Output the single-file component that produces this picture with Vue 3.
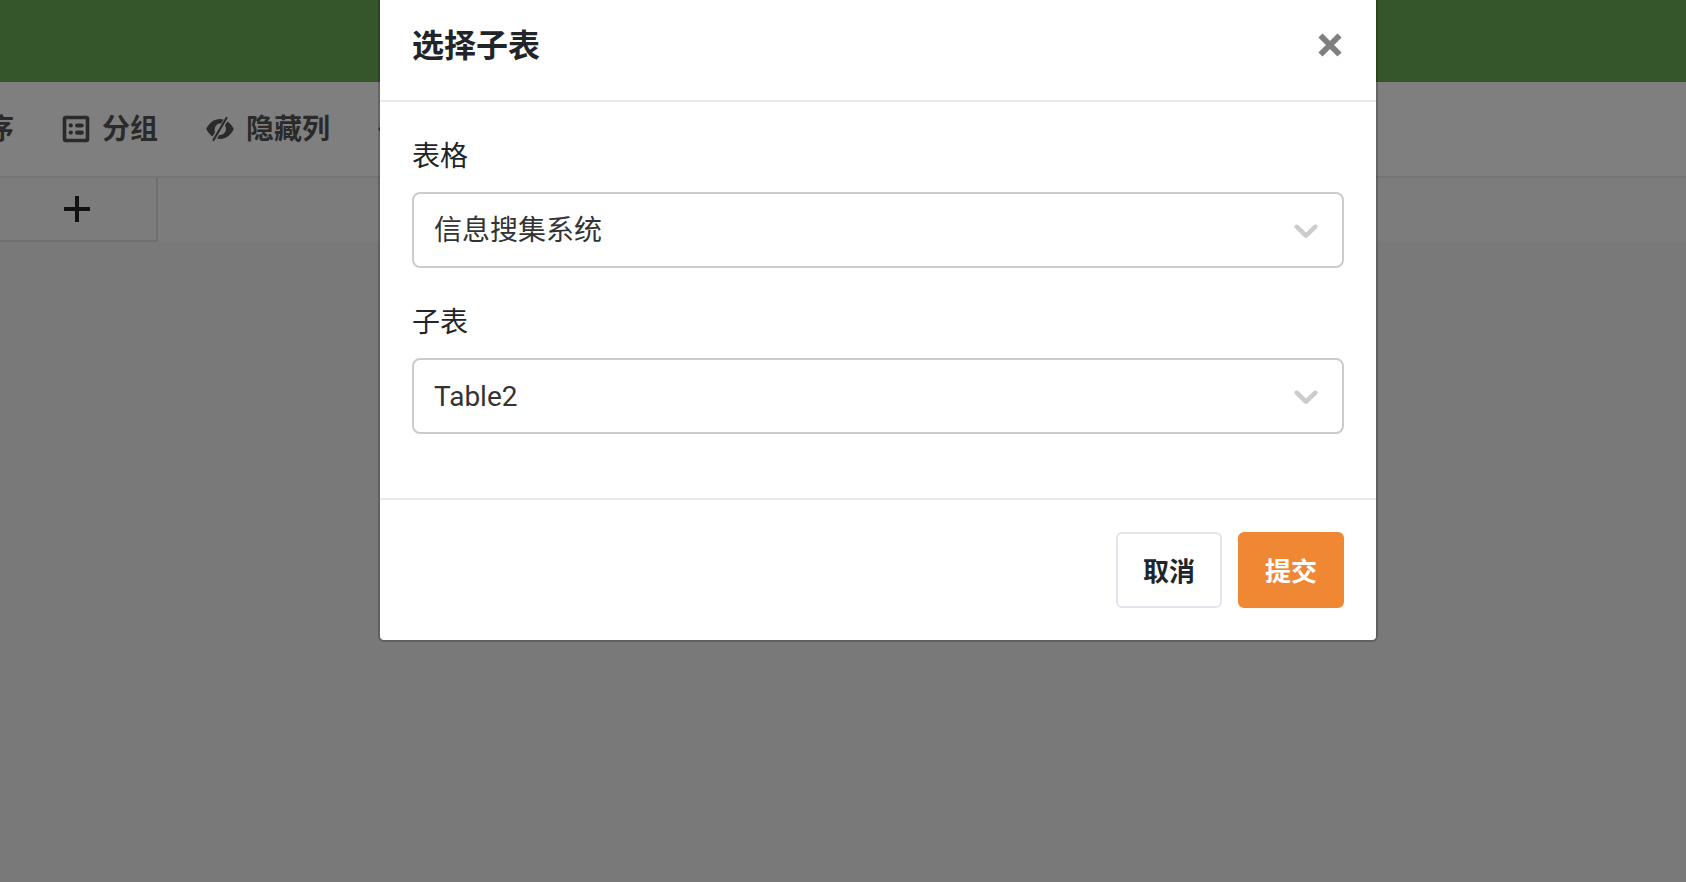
<script setup>
import { ref } from 'vue'

const table = ref('信息搜集系统')
const subtable = ref('Table2')
</script>

<template>
  <div class="page">
    <div class="app" inert>
      <header class="topbar"></header>
      <nav class="toolbar">
        <button class="tool" type="button"><span>排序</span></button>
        <button class="tool" type="button">
          <svg class="icon" viewBox="0 0 32 32" aria-hidden="true">
            <rect x="4.500" y="4.500" width="23" height="23" rx="1" fill="none" stroke="currentColor" stroke-width="3.600" />
            <circle cx="10.800" cy="12.400" r="2.100" fill="currentColor" />
            <circle cx="10.800" cy="19.600" r="2.100" fill="currentColor" />
            <rect x="15" y="10.400" width="8.800" height="4.200" rx="2.100" fill="currentColor" />
            <rect x="15" y="17.600" width="8.800" height="4.200" rx="2.100" fill="currentColor" />
          </svg>
          <span>分组</span>
        </button>
        <button class="tool" type="button">
          <svg class="icon" viewBox="0 0 32 32" aria-hidden="true">
            <path
              fill="currentColor"
              d="M19.500 6.500C18.400 6.200 17.200 6 16 6 10 6 5 10 2.200 16c1.500 3.200 3.700 5.800 6.300 7.500l2.600-4.300A6.500 6.500 0 0 1 17.400 10.200zM23.500 8.500C26.100 10.200 28.300 12.800 29.800 16 27 22 22 26 16 26c-1 0-2-.1-3-.4l2.200-3.500A6.300 6.300 0 0 0 21 12.500z"
            />
            <path d="M22.500 5L9.500 27" stroke="currentColor" stroke-width="2.200" stroke-linecap="round" />
          </svg>
          <span>隐藏列</span>
        </button>
        <button class="tool" type="button" aria-label="更多">
          <svg class="icon" viewBox="0 0 32 32" aria-hidden="true">
            <path d="M5 16h14M9 11l-5 5 5 5" fill="none" stroke="currentColor" stroke-width="3" stroke-linejoin="round" />
          </svg>
        </button>
      </nav>
      <div class="tabs">
        <button class="add" type="button" aria-label="添加">
          <svg class="plus" viewBox="0 0 28 28" aria-hidden="true">
            <path d="M14 1v26M1 14h26" stroke="currentColor" stroke-width="4" />
          </svg>
        </button>
      </div>
      <main class="canvas"></main>
    </div>

    <div class="overlay">
      <form class="modal" role="dialog" aria-labelledby="dialog-title" @submit.prevent>
        <div class="modal-header">
          <h1 id="dialog-title">选择子表</h1>
          <button class="close" type="button" aria-label="关闭">
            <svg viewBox="0 0 24 24" aria-hidden="true">
              <path d="M3.200 3.200L20.800 20.800M20.800 3.200L3.200 20.800" stroke="currentColor" stroke-width="5.400" />
            </svg>
          </button>
        </div>
        <div class="modal-body">
          <div class="field">
            <label for="table">表格</label>
            <div class="control">
              <select id="table" v-model="table">
                <option>信息搜集系统</option>
              </select>
              <svg class="chevron" viewBox="0 0 20 20" aria-hidden="true">
                <path
                  fill="currentColor"
                  d="M4.516 7.548c0.436-0.446 1.043-0.481 1.576 0l3.908 3.747 3.908-3.747c0.533-0.481 1.141-0.446 1.574 0 0.436 0.445 0.408 1.197 0 1.615-0.406 0.418-4.695 4.502-4.695 4.502-0.217 0.223-0.502 0.335-0.787 0.335s-0.570-0.112-0.789-0.335c0 0-4.287-4.084-4.695-4.502s-0.436-1.170 0-1.615z"
                />
              </svg>
            </div>
          </div>
          <div class="field">
            <label for="subtable">子表</label>
            <div class="control">
              <select id="subtable" v-model="subtable">
                <option>Table2</option>
              </select>
              <svg class="chevron" viewBox="0 0 20 20" aria-hidden="true">
                <path
                  fill="currentColor"
                  d="M4.516 7.548c0.436-0.446 1.043-0.481 1.576 0l3.908 3.747 3.908-3.747c0.533-0.481 1.141-0.446 1.574 0 0.436 0.445 0.408 1.197 0 1.615-0.406 0.418-4.695 4.502-4.695 4.502-0.217 0.223-0.502 0.335-0.787 0.335s-0.570-0.112-0.789-0.335c0 0-4.287-4.084-4.695-4.502s-0.436-1.170 0-1.615z"
                />
              </svg>
            </div>
          </div>
        </div>
        <div class="modal-footer">
          <button class="btn cancel" type="button">取消</button>
          <button class="btn submit" type="submit">提交</button>
        </div>
      </form>
    </div>
  </div>
</template>

<style>
body {
  overflow: hidden;
}
</style>

<style scoped>
.page {
  position: relative;
  min-height: 100vh;
  font-family: Roboto, "Noto Sans CJK SC", sans-serif;
  color: #212529;
}
.page * {
  box-sizing: border-box;
}
button {
  margin: 0;
  padding: 0;
  border: 0;
  background: none;
  font: inherit;
  color: inherit;
}
.app {
  display: flex;
  flex-direction: column;
  min-height: 100vh;
}
.topbar {
  height: 82px;
  background: #6aac57;
}
.toolbar {
  display: flex;
  align-items: center;
  gap: 46px;
  height: 96px;
  margin-left: -42px;
  border-bottom: 2px solid #eaeaea;
  background: #fff;
  color: #555;
  font-size: 28px;
  font-weight: 600;
}
.tool {
  display: flex;
  align-items: center;
  gap: 10px;
  flex: none;
  line-height: 42px;
}
.tool span {
  padding-top: 2px;
}
.icon {
  width: 32px;
  height: 32px;
}
.tabs {
  height: 64px;
  background: #f9f9f9;
}
.add {
  display: flex;
  align-items: center;
  justify-content: flex-end;
  width: 158px;
  height: 64px;
  padding-right: 65px;
  border-right: 2px solid #dedede;
  border-bottom: 2px solid #dedede;
}
.plus {
  width: 28px;
  height: 28px;
}
.canvas {
  flex: 1;
  background: #f2f2f2;
}
.overlay {
  position: absolute;
  inset: 0;
  padding: 0 308px 0 378px;
  background: rgba(0, 0, 0, 0.5);
}
.modal {
  border: 2px solid rgba(0, 0, 0, 0.2);
  border-top: 0;
  border-radius: 0 0 6px 6px;
  background: #fff;
  background-clip: padding-box;
}
.modal-header {
  display: flex;
  align-items: center;
  justify-content: space-between;
  padding: 20px 33px 30px 32px;
  border-bottom: 2px solid #e9eaf0;
}
h1 {
  margin: 0;
  padding-top: 2px;
  font-size: 32px;
  font-weight: 600;
  line-height: 48px;
}
.close {
  display: flex;
  color: #7f7f7f;
}
.close svg {
  width: 26px;
  height: 26px;
}
.modal-body {
  padding: 32px 32px 64px;
}
.field + .field {
  margin-top: 32px;
}
label {
  display: block;
  margin-bottom: 12px;
  font-size: 28px;
  line-height: 46px;
}
.control {
  position: relative;
}
select {
  appearance: none;
  display: block;
  width: 100%;
  height: 76px;
  padding: 0 80px 0 20px;
  border: 2px solid #ccc;
  border-radius: 8px;
  background: #fff;
  color: #333;
  font: inherit;
  font-size: 28px;
}
.chevron {
  position: absolute;
  top: 18px;
  right: 18px;
  width: 40px;
  height: 40px;
  color: #ccc;
  pointer-events: none;
}
.modal-footer {
  display: flex;
  justify-content: flex-end;
  gap: 16px;
  padding: 32px;
  border-top: 2px solid #e9eaf0;
}
.btn {
  height: 76px;
  padding: 0 25px 2px;
  border: 2px solid #e1e5ec;
  border-radius: 6px;
  font-size: 26px;
  font-weight: 600;
}
.submit {
  border-color: #f08833;
  background: #f08833;
  color: #fff;
}
</style>
